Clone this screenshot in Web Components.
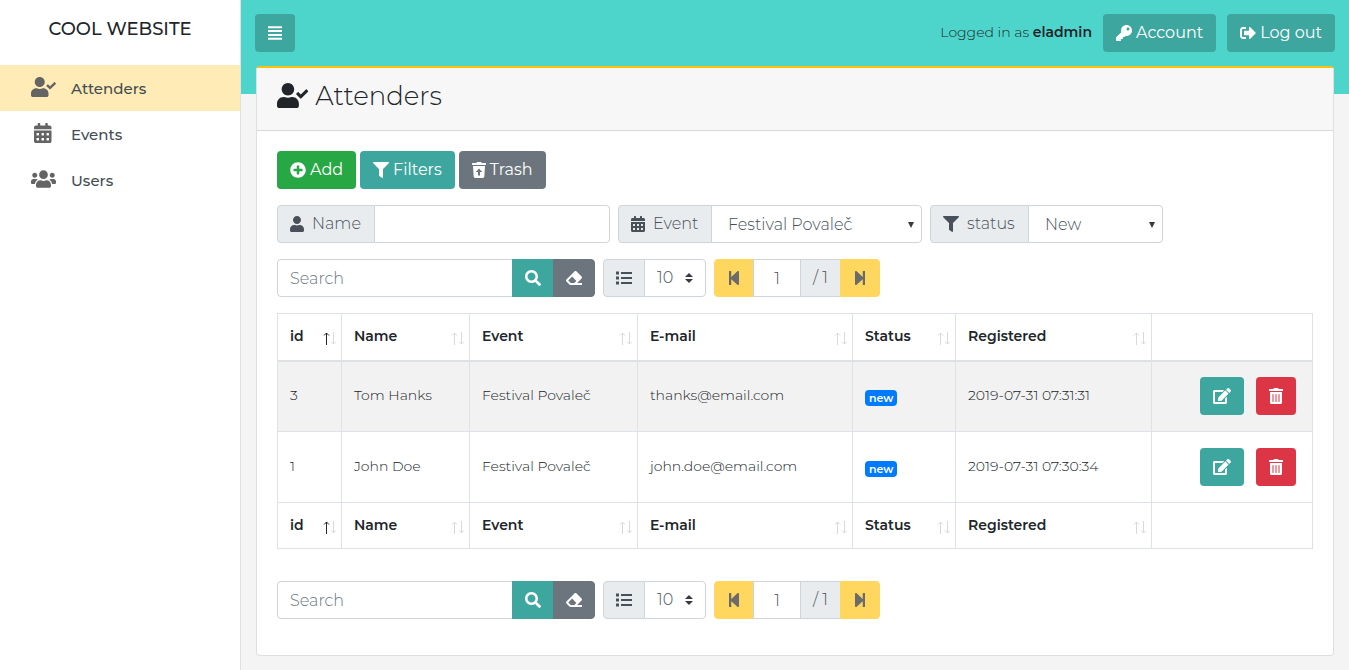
<!DOCTYPE html>
<html lang="en">
<head>
<meta charset="utf-8">
<title>Attenders – Cool Website</title>
<style>
  html, body { margin: 0; min-height: 100%; }
  body {
    --teal: #4ed5cb;
    --teal-dark: #3da69f;
    --yellow: #ffd65e;
    --line: #dee2e6;
    --field-line: #ced4da;
    --addon: #e9ecef;
    --ink: #212529;
    --muted: #495057;
    --grey: #6c757d;
    background: #f4f4f4;
    color: var(--ink);
    font: 300 16px/24px Montserrat, Inter, sans-serif;
  }
</style>
</head>
<body>
<app-shell>
  <side-nav slot="nav" heading="COOL WEBSITE">
    <nav-item icon="user-check" href="#attenders" active>Attenders</nav-item>
    <nav-item icon="calendar" href="#events">Events</nav-item>
    <nav-item icon="users" href="#users">Users</nav-item>
  </side-nav>
  <top-bar slot="top" user="eladmin"></top-bar>
  <content-card icon="user-check" heading="Attenders">
    <action-bar>
      <app-button icon="plus" tone="green">Add</app-button>
      <app-button icon="filter">Filters</app-button>
      <app-button icon="restore" tone="grey">Trash</app-button>
    </action-bar>
    <filter-bar></filter-bar>
    <list-controls></list-controls>
    <attender-table></attender-table>
    <list-controls></list-controls>
  </content-card>
</app-shell>

<script>
const PERSON = 'M224 256c70.7 0 128-57.3 128-128S294.7 0 224 0 96 57.3 96 128s57.3 128 128 128zm89.6 32h-16.7c-22.2 10.2-46.9 16-72.9 16s-50.6-5.8-72.9-16h-16.7C60.2 288 0 348.2 0 422.4V464c0 26.5 21.5 48 48 48h352c26.5 0 48-21.5 48-48v-41.6c0-74.2-60.2-134.4-134.4-134.4z';
const HOLE = 'c0-6.6 5.4-12 12-12h40c6.6 0 12 5.4 12 12v40c0 6.6-5.4 12-12 12h-40c-6.6 0-12-5.4-12-12v-40z';
const LID = 'M432 32H312l-9.4-18.7A24 24 0 0 0 281.1 0H166.8a23.72 23.72 0 0 0-21.4 13.3L136 32H16A16 16 0 0 0 0 48v32a16 16 0 0 0 16 16h416a16 16 0 0 0 16-16V48a16 16 0 0 0-16-16z';
const STEP = 'M64 468V44c0-6.6 5.4-12 12-12h48c6.6 0 12 5.4 12 12v176.4l195.5-181C352.1 22.3 384 36.6 384 64v384c0 27.4-31.9 41.7-52.5 24.6L136 292.7V468c0 6.6-5.4 12-12 12H76c-6.6 0-12-5.4-12-12z';

/* Each icon: [view box width, markup]; all are 512 units high. */
const ICONS = {
  'user': [448, `<path d="${PERSON}"/>`],
  'user-check': [640, `<path d="${PERSON}"/><path d="M636.6 159.6l-27.8-28.2c-4.6-4.7-12.1-4.7-16.8-.1L487.2 235.3l-45.5-45.8c-4.6-4.7-12.1-4.7-16.8-.1l-28.1 27.9c-4.7 4.6-4.7 12.1-.1 16.8l81.7 82.3c4.6 4.7 12.1 4.7 16.8.1l141.3-140.2c4.6-4.7 4.7-12.2.1-16.7z"/>`],
  'calendar': [448, `<path d="M0 464c0 26.5 21.5 48 48 48h352c26.5 0 48-21.5 48-48V192H0v272zM320 268${HOLE}M320 396${HOLE}M192 268${HOLE}M192 396${HOLE}M64 268${HOLE}M64 396${HOLE}M400 64h-48V16c0-8.8-7.2-16-16-16h-32c-8.8 0-16 7.2-16 16v48H160V16c0-8.8-7.2-16-16-16h-32c-8.8 0-16 7.2-16 16v48H48C21.5 64 0 85.5 0 112v48h448v-48c0-26.5-21.5-48-48-48z"/>`],
  'users': [640, `<path d="M96 224c35.3 0 64-28.7 64-64s-28.7-64-64-64-64 28.7-64 64 28.7 64 64 64zm448 0c35.3 0 64-28.7 64-64s-28.7-64-64-64-64 28.7-64 64 28.7 64 64 64zm32 32h-64c-17.6 0-33.5 7.1-45.1 18.6 40.3 22.1 68.9 62 75.1 109.4h66c17.7 0 32-14.3 32-32v-32c0-35.3-28.7-64-64-64zm-256 0c61.9 0 112-50.1 112-112S381.9 32 320 32 208 82.1 208 144s50.1 112 112 112zm76.8 32h-8.3c-20.8 10-43.9 16-68.5 16s-47.6-6-68.5-16h-8.3C179.6 288 128 339.6 128 403.2V432c0 26.5 21.5 48 48 48h288c26.5 0 48-21.5 48-48v-28.8c0-63.6-51.6-115.2-115.2-115.2zm-223.7-13.4C161.5 263.1 145.6 256 128 256H64c-35.3 0-64 28.7-64 64v32c0 17.7 14.3 32 32 32h65.9c6.3-47.4 34.9-87.3 75.2-109.4z"/>`],
  'menu': [448, `<path d="M0 40h448v64H0zM0 163h448v64H0zM0 286h448v64H0zM0 409h448v64H0z"/>`],
  'key': [512, `<path d="M512 176.001C512 273.203 433.202 352 336 352c-11.22 0-22.19-1.062-32.827-3.069l-24.012 27.014A23.999 23.999 0 0 1 261.223 384H224v40c0 13.255-10.745 24-24 24h-40v40c0 13.255-10.745 24-24 24H24c-13.255 0-24-10.745-24-24v-78.059c0-6.365 2.529-12.47 7.029-16.971l161.802-161.802C163.108 213.814 160 195.271 160 176 160 78.798 238.797.001 335.999 0 433.488-.001 512 78.511 512 176.001zM336 128c0 26.51 21.49 48 48 48s48-21.49 48-48-21.49-48-48-48-48 21.49-48 48z"/>`],
  'exit': [512, `<path d="M497 273L329 441c-15 15-41 4.5-41-17v-96H152c-13.3 0-24-10.7-24-24v-96c0-13.3 10.7-24 24-24h136V88c0-21.4 25.9-32 41-17l168 168c9.3 9.4 9.3 24.6 0 34zM192 436v-40c0-6.6-5.4-12-12-12H96c-17.7 0-32-14.3-32-32V160c0-17.7 14.3-32 32-32h84c6.6 0 12-5.4 12-12V76c0-6.6-5.4-12-12-12H96c-53 0-96 43-96 96v192c0 53 43 96 96 96h84c6.6 0 12-5.4 12-12z"/>`],
  'plus': [512, `<path d="M256 8C119 8 8 119 8 256s111 248 248 248 248-111 248-248S393 8 256 8zm144 276c0 6.6-5.4 12-12 12h-92v92c0 6.6-5.4 12-12 12h-56c-6.6 0-12-5.4-12-12v-92h-92c-6.6 0-12-5.4-12-12v-56c0-6.6 5.4-12 12-12h92v-92c0-6.6 5.4-12 12-12h56c6.6 0 12 5.4 12 12v92h92c6.6 0 12 5.4 12 12v56z"/>`],
  'filter': [512, `<path d="M487.976 0H24.028C2.71 0-8.047 25.866 7.058 40.971L192 225.941V432c0 7.831 3.821 15.17 10.237 19.662l80 55.98C298.02 518.69 320 507.493 320 487.98V225.941l184.947-184.97C520.021 25.896 509.338 0 487.976 0z"/>`],
  'restore': [448, `<path d="${LID}"/><path fill-rule="evenodd" d="M32 128h384l-21 339a48 48 0 0 1-48 45H101a48 48 0 0 1-48-45zM224 208L120 320h72v112h64V320h72z"/>`],
  'search': [512, `<path d="M505 442.7L405.3 343c-4.5-4.5-10.6-7-17-7H372c27.6-35.3 44-79.7 44-128C416 93.1 322.9 0 208 0S0 93.1 0 208s93.1 208 208 208c48.3 0 92.7-16.4 128-44v16.3c0 6.4 2.5 12.5 7 17l99.7 99.7c9.4 9.4 24.6 9.4 33.9 0l28.3-28.3c9.4-9.4 9.4-24.6.1-34zM208 336c-70.7 0-128-57.2-128-128 0-70.7 57.2-128 128-128 70.7 0 128 57.2 128 128 0 70.7-57.2 128-128 128z"/>`],
  'eraser': [512, `<path d="M497.941 273.941c18.745-18.745 18.745-49.137 0-67.882l-160-160c-18.745-18.745-49.136-18.746-67.883 0l-256 256c-18.745 18.745-18.745 49.137 0 67.882l96 96A48.004 48.004 0 0 0 144 480h356c6.627 0 12-5.373 12-12v-40c0-6.627-5.373-12-12-12H355.883l142.058-142.059zm-302.627-62.627l137.373 137.373L265.373 416H150.628l-80-80 124.686-124.686z"/>`],
  'list': [512, `<path d="M0 48h96v96H0zM0 208h96v96H0zM0 368h96v96H0zM160 64h352v64H160zM160 224h352v64H160zM160 384h352v64H160z"/>`],
  'first': [448, `<path d="${STEP}"/>`],
  'last': [448, `<path transform="translate(448 0) scale(-1 1)" d="${STEP}"/>`],
  'edit': [576, `<path d="M402.6 83.2l90.2 90.2c3.8 3.8 3.8 10 0 13.8L274.4 405.6l-92.8 10.3c-12.4 1.4-22.9-9.1-21.5-21.5l10.3-92.8L388.8 83.2c3.8-3.8 10-3.8 13.8 0zm162-22.9l-48.8-48.8c-15.2-15.2-39.9-15.2-55.2 0l-35.4 35.4c-3.8 3.8-3.8 10 0 13.8l90.2 90.2c3.8 3.8 10 3.8 13.8 0l35.4-35.4c15.2-15.3 15.2-40 0-55.2zM384 346.2V448H64V128h229.8c3.2 0 6.2-1.3 8.5-3.5l40-40c7.6-7.6 2.2-20.5-8.5-20.5H48C21.5 64 0 85.5 0 112v352c0 26.5 21.5 48 48 48h352c26.5 0 48-21.5 48-48V306.2c0-10.7-12.9-16-20.5-8.5l-40 40c-2.2 2.3-3.5 5.3-3.5 8.5z"/>`],
  'trash': [448, `<path d="M32 464a48 48 0 0 0 48 48h288a48 48 0 0 0 48-48V128H32zm272-256a16 16 0 0 1 32 0v224a16 16 0 0 1-32 0zm-96 0a16 16 0 0 1 32 0v224a16 16 0 0 1-32 0zm-96 0a16 16 0 0 1 32 0v224a16 16 0 0 1-32 0z${LID}"/>`],
};

/* Defines an element whose shadow root holds the markup that render() gives. */
function define(name, render) {
  customElements.define(name, class extends HTMLElement {
    constructor() { super(); this.attachShadow({ mode: 'open' }); }
    connectedCallback() {
      const t = document.createElement('template');
      t.innerHTML = render(this);
      this.shadowRoot.replaceChildren(t.content.cloneNode(true));
    }
  });
}
const attr = (el, name, fallback = '') => el.getAttribute(name) ?? fallback;

define('app-icon', el => {
  const [w, body] = ICONS[attr(el, 'name')];
  return `<style>
    :host { display: inline-flex; flex: none; }
    svg { height: var(--icon-size, 16px); fill: currentColor; }
  </style><svg viewBox="0 0 ${w} 512" aria-hidden="true">${body}</svg>`;
});

define('app-button', el => {
  const tones = { teal: 'var(--teal-dark)', green: '#28a745', grey: 'var(--grey)', red: '#dc3545' };
  const tag = el.hasAttribute('href') ? 'a' : 'button';
  const extra = tag === 'a' ? `href="${attr(el, 'href')}"` : 'type="button"';
  const label = attr(el, 'label');
  return `<style>
    :host { display: inline-flex; }
    a, button {
      display: inline-flex; align-items: center; justify-content: center; gap: 4px;
      box-sizing: border-box; height: 38px; margin: 0; padding: 0 13px;
      border: 0; border-radius: 4px; background: ${tones[attr(el, 'tone', 'teal')]};
      color: #fff; font: inherit; font-weight: 400; line-height: 24px;
      text-decoration: none; white-space: nowrap; cursor: pointer;
    }
  </style><${tag} ${extra} ${label ? `aria-label="${label}"` : ''}><app-icon name="${attr(el, 'icon')}"></app-icon><slot></slot></${tag}>`;
});

define('app-shell', () => `<style>
  :host { display: grid; grid-template-columns: 241px minmax(0, 1fr); min-height: 100vh; }
  aside { box-sizing: border-box; background: #fff; border-right: 1px solid var(--line); }
  .page {
    padding: 14px;
    background: linear-gradient(var(--teal), var(--teal)) top / 100% 94px no-repeat;
  }
  main { padding: 14px 1px 0; }
</style>
<aside><slot name="nav"></slot></aside>
<div class="page"><slot name="top"></slot><main><slot></slot></main></div>`);

define('side-nav', el => `<style>
  :host { display: block; }
  h1 { margin: 0; padding: 17px 0 24px; font-size: 18px; font-weight: 500; line-height: 24px; text-align: center; }
  nav { display: flex; flex-direction: column; }
</style><h1>${attr(el, 'heading')}</h1><nav><slot></slot></nav>`);

define('nav-item', el => `<style>
  :host { display: block; --icon-size: 20px; }
  a {
    display: grid; grid-template-columns: 26px 1fr; column-gap: 15px; align-items: center;
    height: 46px; padding-left: 30px; color: #454d54; font-size: 15px; font-weight: 500; text-decoration: none;
    background: ${el.hasAttribute('active') ? '#ffebb5' : 'transparent'};
  }
  app-icon { justify-self: center; padding-bottom: 2px; color: #646464; }
  span { padding-top: 2px; }
</style><a href="${attr(el, 'href')}"><app-icon name="${attr(el, 'icon')}"></app-icon><span><slot></slot></span></a>`);

define('top-bar', el => `<style>
  :host { display: flex; align-items: center; gap: 11px; }
  p { margin: 0 0 0 auto; padding-bottom: 2px; font-size: 14px; }
  strong { font-weight: 600; }
</style>
<app-button icon="menu" label="Toggle menu"></app-button>
<p>Logged in as <strong>${attr(el, 'user')}</strong></p>
<app-button icon="key" href="#account">Account</app-button>
<app-button icon="exit" href="#logout">Log out</app-button>`);

define('content-card', el => `<style>
  :host {
    display: block; background: #fff; border: 1px solid #dfdfdf;
    border-top: 2px solid #ffc107; border-radius: 4px;
  }
  header {
    display: flex; align-items: center; gap: 7px; height: 63px; box-sizing: border-box;
    padding: 0 20px 8px; background: #f7f7f7; border-bottom: 1px solid #d9d9d9; --icon-size: 25px;
  }
  h2 { margin: 0; padding-top: 1px; font-size: 26px; font-weight: 300; line-height: 32px; }
  .body { display: flex; flex-direction: column; gap: 16px; padding: 20px 20px 36px; }
</style>
<header><app-icon name="${attr(el, 'icon')}"></app-icon><h2>${attr(el, 'heading')}</h2></header>
<div class="body"><slot></slot></div>`);

define('action-bar', () => `<style>
  :host { display: flex; flex-wrap: wrap; gap: 4px; }
</style><slot></slot>`);

/* Look of joined fields: an addon, then inputs, selects or buttons. */
const FIELDS = `
  :host { display: flex; flex-wrap: wrap; gap: 16px 8px; color: var(--muted); }
  .group { display: flex; height: 38px; }
  .group > * {
    box-sizing: border-box; height: 38px; margin: 0 0 0 -1px; padding: 0 12px; border: 1px solid var(--field-line);
    border-radius: 0; background: #fff; color: inherit; font: inherit; line-height: 24px;
  }
  .group > :first-child { margin-left: 0; border-radius: 4px 0 0 4px; }
  .group > :last-child { border-radius: 0 4px 4px 0; }
  .group > .addon { display: flex; align-items: center; gap: 8px; background: var(--addon); white-space: nowrap; }
  .group > button { display: flex; align-items: center; justify-content: center; padding: 0; cursor: pointer; }
  .group > input, .group > select { flex: 1; min-width: 0; }
  select { appearance: none; }
  input::placeholder { color: var(--grey); opacity: 1; }
`;

define('filter-bar', () => `<style>${FIELDS}
  .name { width: 333px; } .name .addon { width: 98px; }
  .event { width: 304px; } .event .addon { width: 94px; }
  .status { width: 233px; } .status .addon { width: 99px; }
  .group > select {
    padding: 2px 24px 0 16px;
    background: #fff url('data:image/svg+xml,<svg xmlns="http://www.w3.org/2000/svg" width="7" height="7"><path d="M0 1h6L3 7z" fill="%23343a40"/></svg>') right 6px center no-repeat;
  }
</style>
<div class="group name"><label class="addon" for="name"><app-icon name="user"></app-icon>Name</label><input id="name" type="text"></div>
<div class="group event"><label class="addon" for="event"><app-icon name="calendar"></app-icon>Event</label><select id="event"><option>Festival Povaleč</option></select></div>
<div class="group status"><label class="addon" for="status"><app-icon name="filter"></app-icon>status</label><select id="status"><option>New</option></select></div>`);

define('list-controls', () => `<style>${FIELDS}
  .search { width: 318px; }
  .group > .find, .group > .clear { width: 42px; color: #fff; }
  .group > .find { border-color: var(--teal-dark); background: var(--teal-dark); }
  .group > .clear { border-color: var(--grey); background: var(--grey); }
  .length { width: 103px; }
  .group > select {
    padding: 0 24px 0 12px;
    background: #fff url('data:image/svg+xml,<svg xmlns="http://www.w3.org/2000/svg" width="8" height="10"><path d="M0 4L4 0l4 4zM0 6h8l-4 4z" fill="%23343a40"/></svg>') right 12px center no-repeat;
  }
  .pager { width: 166px; }
  .group > .step { width: 40px; border-color: var(--yellow); background: var(--yellow); color: #6b6b6b; }
  .group > .page { padding: 0; text-align: center; }
  .group > .total { width: 41px; justify-content: center; }
</style>
<div class="group search">
  <input type="text" placeholder="Search" aria-label="Search">
  <button class="find" type="button" aria-label="Search"><app-icon name="search"></app-icon></button>
  <button class="clear" type="button" aria-label="Clear search"><app-icon name="eraser"></app-icon></button>
</div>
<div class="group length">
  <label class="addon" for="length" aria-label="Rows per page"><app-icon name="list"></app-icon></label>
  <select id="length"><option>10</option></select>
</div>
<div class="group pager">
  <button class="step" type="button" aria-label="First page"><app-icon name="first"></app-icon></button>
  <input class="page" type="text" value="1" aria-label="Page">
  <span class="addon total">/ 1</span>
  <button class="step" type="button" aria-label="Last page"><app-icon name="last"></app-icon></button>
</div>`);

define('sort-arrows', el => `<style>
  :host { display: block; flex: none; height: 13px; }
  path { fill: none; stroke: #d9d9d9; }
  .on { stroke: #212529; }
</style><svg width="13" height="13" viewBox="0 0 13 13" aria-hidden="true">
  <path class="${el.hasAttribute('up') ? 'on' : ''}" d="M3.5 13V1M1 3.5L3.5 1L6 3.5"/>
  <path d="M10.5 0V12M8 9.5L10.5 12L13 9.5"/></svg>`);

define('status-badge', () => `<style>
  :host {
    display: inline-block; margin-top: 4px; padding: 0 4px; border-radius: 4px; background: #007bff;
    color: #fff; font-size: 11px; font-weight: 600; line-height: 16px; vertical-align: middle;
  }
</style><slot></slot>`);

define('attender-table', () => {
  const titles = ['id', 'Name', 'Event', 'E-mail', 'Status', 'Registered'];
  const rows = [
    ['3', 'Tom Hanks', 'Festival Povaleč', 'thanks@email.com', 'new', '2019-07-31 07:31:31'],
    ['1', 'John Doe', 'Festival Povaleč', 'john.doe@email.com', 'new', '2019-07-31 07:30:34'],
  ];
  const heads = '<tr>' + titles.map((t, i) =>
    `<th scope="col"><div>${t}<sort-arrows ${i ? '' : 'up'}></sort-arrows></div></th>`).join('') + '<td></td></tr>';
  const line = r => '<tr>' + r.map((c, i) => `<td>${i === 4 ? `<status-badge>${c}</status-badge>` : c}</td>`).join('') +
    `<td class="tools"><div><app-button icon="edit" label="Edit"></app-button><app-button icon="trash" tone="red" label="Delete"></app-button></div></td></tr>`;
  return `<style>
    :host { display: block; margin-bottom: 16px; overflow-x: auto; }
    table { width: 100%; table-layout: fixed; border-collapse: collapse; font-size: 14px; line-height: 21px; }
    th, td { box-sizing: border-box; padding: 0 12px; border: 1px solid var(--line); text-align: left; }
    thead tr { height: 47px; }
    tfoot tr { height: 46px; }
    thead th, thead td { border-bottom-width: 2px; }
    tbody tr { height: 71px; }
    tbody tr:nth-child(odd) { background: #f2f2f2; }
    th { padding-right: 5px; font-weight: 600; }
    th div { display: flex; align-items: center; justify-content: space-between; }
    td { padding-bottom: 2px; }
    .tools { padding: 0 16px 0 12px; }
    .tools div { display: flex; justify-content: flex-end; gap: 12px; }
  </style>
  <table>
    <colgroup><col style="width:64px"><col style="width:128px"><col style="width:168px"><col style="width:215px"><col style="width:103px"><col style="width:196px"><col></colgroup>
    <thead>${heads}</thead>
    <tbody>${rows.map(line).join('')}</tbody>
    <tfoot>${heads}</tfoot>
  </table>`;
});
</script>
</body>
</html>
